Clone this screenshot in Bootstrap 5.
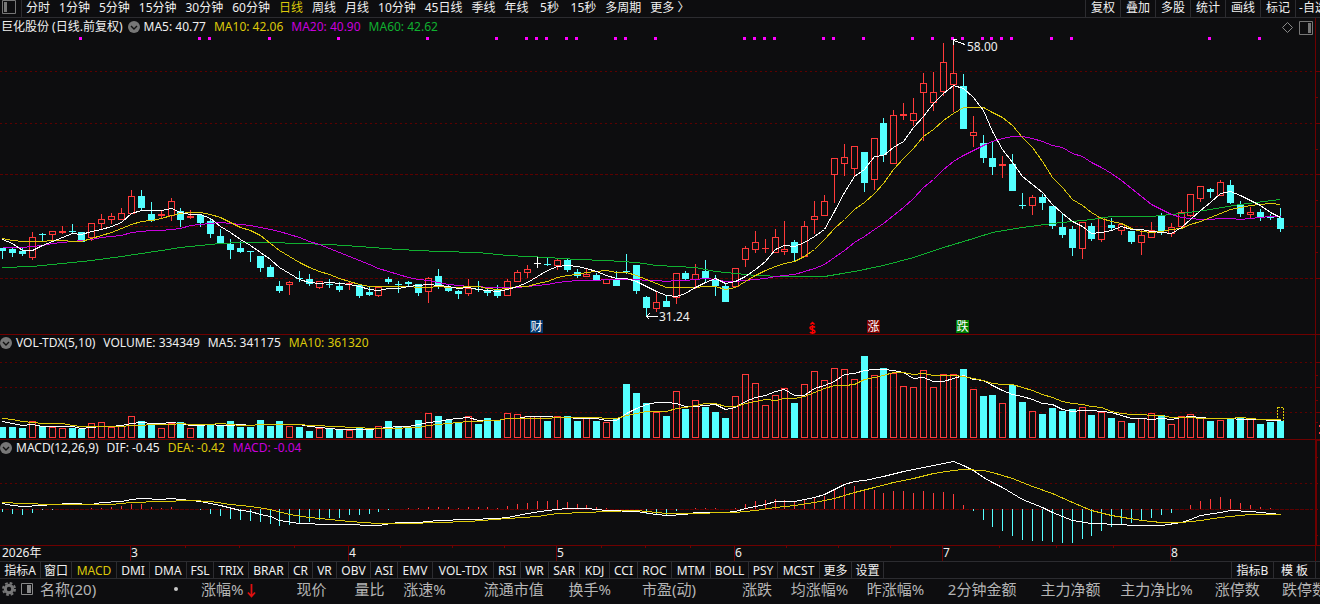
<!DOCTYPE html>
<html lang="zh-CN" data-bs-theme="dark">
<head>
<meta charset="utf-8">
<meta name="viewport" content="width=device-width, initial-scale=1">
<title>巨化股份 日线</title>
<link href="https://cdn.jsdelivr.net/npm/bootstrap@5.3.0/dist/css/bootstrap.min.css" rel="stylesheet">
<style>
:root{--ink:#0d0d0f;--rule:#2c2c30;--up:#ff3a3a;--down:#54ffff;--yel:#dcc80a;--mag:#c800dc;--grn:#10b030;--frame:#6e0000;--dash:#5c0000}
body{background:var(--ink);color:#f0f0f0;font-family:"Noto Sans","Noto Sans CJK SC",sans-serif;font-size:12px;line-height:14px;overflow-x:hidden}
.btn{--bs-btn-padding-x:0;--bs-btn-padding-y:0;--bs-btn-font-size:12px;--bs-btn-line-height:16px;--bs-btn-border-width:0px;--bs-btn-border-radius:0;--bs-btn-color:#f0f0f0;white-space:nowrap}
.btn.current{color:var(--yel)}
.topbar{height:18px;border-bottom:1px solid var(--rule)}
.periods{gap:9px;padding-left:4px;border-left:1px solid var(--rule)}
.periods .btn{min-width:24px}
.tools .btn{width:35px;height:17px;padding-bottom:1px;border-left:1px solid var(--rule);flex:none}
.tools{width:235px}
.panel-head{left:0;top:1px;gap:8px;white-space:nowrap;line-height:14px}
.panel-head svg{display:block}
.stock-head{padding-left:1px;top:2px}
.fold{width:12px;height:12px;flex:none;margin-right:-4px}
.stock-head .fold{margin-left:-3px}
.corner{right:7px;top:2px;gap:5px}
.c-yel{color:var(--yel)}.c-mag{color:var(--mag)}.c-grn{color:var(--grn)}
.plot{display:block;width:100%;shape-rendering:crispEdges}
.plot text{font-size:12px;fill:#f0f0f0;shape-rendering:auto}
.plot .tag{text-anchor:middle;fill:#fff}
.plot .smooth{shape-rendering:auto}
.tabs{height:18px;border-top:1px solid var(--rule);border-bottom:1px solid var(--rule)}
.tabs .btn{--bs-btn-line-height:14px;padding-top:2px;border-right:1px solid var(--rule);flex:none}
.tabs .side{width:42px;border-left:1px solid var(--rule);border-right:0}
.tabs .edge{width:5px;border-left:1px solid var(--rule)}
.quotes{table-layout:fixed;width:1327px;color:#b4b4b4;font-size:15px;line-height:22px;margin-top:-1px}
.quotes th{font-weight:400;text-align:right;padding:0;white-space:nowrap}
.quotes th:first-child{text-align:left;padding-left:2px}
.mark-name{margin-left:7px}
.n0{width:189px}.n1{width:67px}.n2{width:70px}.n3{width:58px}.n4{width:61px}.n5{width:98px}.n6{width:67px}.n7{width:85px}.n8{width:76px}.n9{width:92px}.n10{width:84px}
</style>
</head>
<body>
<header class="topbar d-flex align-items-stretch">
  <button class="btn flex-shrink-0 d-flex" aria-label="侧栏"><svg width="21" height="17"><path d="M2.5.5h13v13h-13z" fill="none" stroke="#777"/><path d="M4 2h3v10H4z" fill="#777"/></svg></button>
  <nav class="periods d-flex flex-grow-1 align-items-start" id="periods"></nav>
  <div class="tools d-flex flex-shrink-0" id="tools"></div>
</header>

<main>
  <section class="position-relative">
    <div class="panel-head stock-head position-absolute d-flex align-items-center">
      <span>巨化股份 (日线.前复权)</span>
      <button class="btn fold" aria-label="折叠"><svg width="12" height="12"><circle cx="6" cy="6" r="6" fill="#777"/><path d="M3 5l3 3 3-3" fill="none" stroke="#111" stroke-width="1.4"/></svg></button>
      <span>MA5: 40.77</span><span class="c-yel">MA10: 42.06</span><span class="c-mag">MA20: 40.90</span><span class="c-grn">MA60: 42.62</span>
    </div>
    <div class="corner position-absolute d-flex">
      <button class="btn d-flex" aria-label="标注"><svg width="13" height="15"><path d="M6.500 2.500l5 5-5 5-5-5z" fill="none" stroke="#888"/></svg></button>
      <button class="btn d-flex" aria-label="右栏"><svg width="14" height="15"><path d="M.5 1.500h13v13H.5z" fill="none" stroke="#777"/><path d="M9 3h3v10H9z" fill="#777"/></svg></button>
    </div>
    <svg class="plot" id="kline"></svg>
  </section>
  <section class="position-relative">
    <div class="panel-head position-absolute d-flex align-items-center">
      <button class="btn fold" aria-label="折叠"><svg width="12" height="12"><circle cx="6" cy="6" r="6" fill="#777"/><path d="M3 5l3 3 3-3" fill="none" stroke="#111" stroke-width="1.4"/></svg></button>
      <span>VOL-TDX(5,10)</span><span>VOLUME: 334349</span><span>MA5: 341175</span><span class="c-yel">MA10: 361320</span>
    </div>
    <svg class="plot" id="volume"></svg>
  </section>
  <section class="position-relative">
    <div class="panel-head position-absolute d-flex align-items-center">
      <button class="btn fold" aria-label="折叠"><svg width="12" height="12"><circle cx="6" cy="6" r="6" fill="#777"/><path d="M3 5l3 3 3-3" fill="none" stroke="#111" stroke-width="1.4"/></svg></button>
      <span>MACD(12,26,9)</span><span>DIF: -0.45</span><span class="c-yel">DEA: -0.42</span><span class="c-mag">MACD: -0.04</span>
    </div>
    <svg class="plot" id="macd"></svg>
  </section>
  <svg class="plot" id="axis"></svg>
</main>

<nav class="tabs d-flex align-items-stretch">
  <div class="d-flex flex-grow-1" id="indicators"></div>
  <button class="btn side">指标B</button><button class="btn side">模 板</button><span class="edge"></span>
</nav>

<footer class="overflow-hidden">
  <table class="quotes mb-0">
    <colgroup><col class="n0"><col class="n1"><col class="n2"><col class="n3"><col class="n4"><col class="n5"><col class="n6"><col class="n7"><col class="n8"><col class="n8"><col class="n8"><col class="n9"><col class="n10"><col class="n9"><col class="n6"><col class="n6"></colgroup>
    <thead><tr>
      <th scope="col"><div class="d-flex align-items-center">
        <svg width="14" height="14" viewBox="0 0 14 14"><circle cx="7" cy="7" r="3.700" fill="none" stroke="#777" stroke-width="3"/><circle cx="7" cy="7" r="6" fill="none" stroke="#777" stroke-width="2" stroke-dasharray="2.700 2.012"/></svg>
        <svg class="ms-1" width="13" height="12"><path d="M1.500.5h11v11h-11z" fill="none" stroke="#888"/><path d="M7 2h4v8H7z" fill="#888"/></svg>
        <span class="mark-name">名称(20)</span><svg class="ms-auto me-2" width="10" height="6"><circle cx="5" cy="3" r="2" fill="#c8c8c8"/></svg>
      </div></th>
      <th scope="col">涨幅%<svg class="ms-1" width="9" height="14"><path d="M4.500 0v12M1 8.500l3.500 4 3.500-4" fill="none" stroke="#e01010" stroke-width="1.800"/></svg></th>
      <th scope="col">现价</th><th scope="col">量比</th><th scope="col">涨速%</th><th scope="col">流通市值</th><th scope="col">换手%</th><th scope="col">市盈(动)</th><th scope="col">涨跌</th><th scope="col">均涨幅%</th><th scope="col">昨涨幅%</th><th scope="col">2分钟金额</th><th scope="col">主力净额</th><th scope="col">主力净比%</th><th scope="col">涨停数</th><th scope="col">跌停数</th>
    </tr></thead>
  </table>
</footer>

<script src="https://cdn.jsdelivr.net/npm/bootstrap@5.3.0/dist/js/bootstrap.bundle.min.js"></script>
<script>
const buttons = (id, items, current) => {
  document.getElementById(id).innerHTML = items.map(item => {
    const [name, width] = [].concat(item);
    return `<button class="btn${name === current ? ' current' : ''}"${width ? ` style="width:${width}px"` : ''}>${name}</button>`;
  }).join('');
};
buttons('periods', ['分时','1分钟','5分钟','15分钟','30分钟','60分钟','日线','周线','月线','10分钟','45日线','季线','年线','5秒','15秒','多周期','更多 〉'], '日线');
buttons('tools', ['复权','叠加','多股','统计','画线','标记','-自选']);
buttons('indicators', [['指标A',41],['窗口',31],['MACD',45],['DMI',33],['DMA',37],['FSL',27],['TRIX',35],['BRAR',40],['CR',24],['VR',24],['OBV',34],['ASI',27],['EMV',35],['VOL-TDX',61],['RSI',27],['WR',28],['SAR',31],['KDJ',30],['CCI',28],['ROC',34],['MTM',39],['BOLL',38],['PSY',29],['MCST',42],['更多',32],['设置',32]], 'MACD');

// one day per entry: kind (r up, c down, w flat), high, body top, body bottom, low
const days = `c 248 248 251 259|c 248 249 253 257|c 248 251 254 256|r 232 237 258 260|c 233 234 235 242|r 231 231 235 240|r 226 231 233 234|c 224 231 232 233|c 232 232 242 242|r 223 223 238 241
r 214 219 224 230|r 213 216 220 224|r 208 213 220 220|r 190 196 214 214|c 190 196 208 210|c 202 214 221 222|r 211 214 216 219|r 198 201 216 221|c 208 211 220 227|r 210 216 218 219
c 215 215 223 227|c 219 221 234 238|c 229 236 243 244|c 239 244 250 259|c 241 248 252 253|c 251 251 252 262|c 256 256 268 272|c 265 267 277 277|c 281 286 291 293|r 281 282 285 295
c 271 278 279 282|c 274 279 284 286|r 281 281 288 289|c 279 284 285 288|c 282 286 290 292|r 282 283 284 290|c 284 285 296 298|c 286 292 295 296|r 287 287 296 297|c 277 279 282 284
c 281 284 285 293|c 281 282 284 286|c 284 284 293 296|r 277 278 292 303|c 269 276 287 289|c 284 288 291 292|c 290 291 294 299|r 279 288 294 296|c 281 289 290 292|c 289 290 293 296
c 285 290 296 298|r 279 281 296 296|r 270 272 282 282|r 265 269 273 278|w 257 263 264 268|c 258 264 265 266|r 258 260 266 270|c 259 260 270 272|c 269 272 276 278|r 269 274 277 277
c 273 275 280 281|r 279 279 284 284|c 271 279 286 286|c 254 271 272 274|c 265 265 291 294|c 296 297 308 317|r 291 302 309 312|c 295 301 307 307|r 273 273 298 304|c 271 273 279 280
r 264 274 280 289|c 260 271 279 282|c 275 279 286 296|c 284 286 302 302|r 268 268 287 287|r 246 248 260 267|r 231 242 250 253|r 239 248 249 253|r 229 237 253 253|r 221 249 252 255
c 240 242 253 261|r 221 226 257 257|r 201 216 220 234|r 195 201 216 216|r 158 158 175 203|r 144 157 164 176|r 146 146 169 177|c 152 152 183 192|r 138 138 180 190|c 118 123 155 162
r 110 115 164 164|r 103 114 116 120|r 98 113 121 126|r 73 83 93 141|r 72 92 103 111|r 43 62 92 96|r 41 73 85 112|c 74 86 129 129|r 116 132 136 147|c 135 143 158 163
c 142 158 167 175|r 156 164 166 178|c 154 164 191 191|c 193 205 206 209|r 195 197 206 215|c 194 197 203 210|c 206 206 226 229|c 213 227 235 238|c 226 229 248 256|r 222 222 249 259
c 223 226 239 241|r 217 217 240 242|c 218 225 228 231|r 223 224 231 235|c 231 231 242 244|r 230 235 243 255|r 222 230 238 238|c 213 216 231 235|r 223 227 234 237|r 210 212 227 228
r 194 194 216 217|r 186 186 199 202|c 188 189 192 198|r 180 182 196 196|c 180 185 203 204|c 201 204 214 217|r 207 212 215 218|c 209 212 218 221|c 214 217 218 220|c 208 218 229 232`
  .split(/[|\n]/).map(s => { const [k, ...v] = s.trim().split(' '); return [k, ...v.map(Number)]; });
const volumes = [11,11,10,17,12,11,10,10,9,15,16,11,12,22,17,15,10,15,16,10,13,14,13,17,11,11,18,12,17,12,11,7,10,9,
9,8,10,9,12,17,12,10,18,25,22,18,16,22,14,20,18,25,24,22,22,17,22,22,17,20,17,16,20,54,45,35,26,
22,47,29,38,31,26,20,42,64,55,33,43,50,35,54,67,58,70,69,59,82,63,70,65,52,51,68,51,64,64,69,49,42,
43,35,53,36,27,24,30,27,29,31,23,26,20,17,15,20,25,23,14,22,24,21,17,18,20,21,20,14,16,17];
const hist = [-3,-5,-6,-4,-1,-1,0,0,0,1,1,2,3,5,5,2,1,2,0,0,-1,-5,-7,-10,-11,-12,-13,-15,-17,-16,-14,-13,-11,-9,
-9,-6,-6,-5,-3,-1,0,1,1,2,2,2,1,2,2,2,1,3,5,6,8,8,9,7,5,4,2,1,0,0,0,-5,-6,
-6,-2,0,1,1,1,0,1,5,8,9,10,9,7,9,11,13,19,22,23,18,19,16,18,18,16,18,16,17,15,4,-2,-11,
-18,-22,-27,-31,-32,-32,-33,-34,-34,-30,-27,-22,-18,-15,-14,-12,-9,-6,-4,0,4,8,10,12,10,6,4,2,1,0];
const ma60 = [[0,267],[3,266],[5,264],[7,262],[9,260],[12,256],[14,253],[16,250],[18,247],[20,245],[22,243],[24,242],[27,242],[30,243],[33,244],[36,246],[40,249],[44,251],[48,252],[51,255],[55,257],[58,259],[61,260],[64,262],[66,265],[68,266],[70,267],[72,271],[74,273],[76,275],[79,276],[83,276],[86,271],[89,265],[92,257],[95,247],[98,238],[100,232],[103,227],[106,223],[110,219],[112,216],[116,216],[119,213],[122,209],[125,204],[129,199]];
const dif = [[0,503],[1,505],[2,506],[4,505],[5,504],[7,503],[9,504],[10,502],[12,501],[13,499],[14,498],[16,499],[17,498],[18,499],[20,501],[22,505],[24,510],[25,511],[26,514],[27,516],[28,520],[30,523],[33,524],[35,524],[37,525],[38,525],[40,522],[42,522],[44,520],[47,519],[50,518],[51,517],[53,513],[55,510],[57,508],[59,508],[61,510],[64,511],[66,514],[67,515],[69,514],[70,512],[73,512],[74,511],[75,508],[77,504],[78,501],[80,501],[82,497],[83,494],[84,489],[85,484],[86,481],[87,480],[89,476],[91,471],[92,469],[94,465],[96,461],[97,465],[98,470],[99,477],[100,482],[101,487],[103,499],[105,507],[106,512],[107,516],[108,520],[110,523],[113,524],[114,525],[117,525],[119,522],[120,519],[121,515],[123,512],[124,510],[126,511],[129,514]];
const dea = [[0,502],[2,503],[5,504],[8,504],[11,504],[13,502],[16,501],[19,500],[21,501],[23,504],[25,506],[27,509],[29,514],[31,517],[33,519],[35,521],[38,523],[41,523],[44,522],[47,521],[51,518],[54,516],[56,513],[59,512],[61,511],[64,510],[66,512],[67,513],[69,513],[74,512],[76,510],[78,507],[80,505],[82,502],[84,498],[86,492],[88,487],[90,482],[92,478],[94,473],[96,470],[97,469],[99,470],[100,472],[102,478],[104,486],[106,493],[108,502],[110,510],[112,515],[115,520],[117,522],[119,522],[121,520],[123,517],[125,515],[126,514],[129,514]];
const alerts = [8,20,21,27,34,43,50,53,54,55,57,58,62,63,66,75,76,77,78,83,84,87,92,94,96,97,99,100,101,102,106,108,122,127];

const average = (series, n, seed) => series.map((_, i) =>
  [i, i < n - 1 ? seed[i] : Math.round(series.slice(i - n + 1, i + 1).reduce((a, b) => a + b) / n)]);
const closes = days.map(d => d[0] === 'c' ? d[3] - 1 : d[2]);

const rect = (x, y, w, h, fill) => `<rect x="${x}" y="${y}" width="${w}" height="${h}" fill="${fill}"/>`;
const box = (x, y, w, h, color, extra = '') => `<rect x="${x + .5}" y="${y + .5}" width="${w - 1}" height="${h - 1}" fill="none" stroke="${color}" ${extra}/>`;
const path = (d, color, extra = '') => `<path d="${d}" fill="none" stroke="${color}" ${extra}/>`;

function draw() {
  const W = document.querySelector('main').clientWidth, edge = W - 5, step = (edge - 38) * 9.902 / 1277;
  const X = i => Math.floor(2.72 + step * i);
  const line = (pts, color) => `<polyline fill="none" stroke="${color}" points="${pts.map(([i, y]) => `${X(i) + .5},${y + .5}`).join(' ')}"/>`;
  const grid = (y, dash, color = 'var(--dash)') => path(`M0 ${y + .5}H${edge - 2}`, color, `stroke-dasharray="${dash}"`);
  const ticks = (ys, w) => ys.map(y => rect(edge, y, w, 1, 'var(--frame)')).join('');
  const put = (id, top, height, body) => {
    const s = document.getElementById(id);
    s.setAttribute('height', height);
    s.setAttribute('viewBox', `0 ${top} ${W} ${height}`);
    s.innerHTML = body + rect(edge, top, 1, height, 'var(--frame)');
  };
  const frame = y => rect(0, y, W, 1, 'var(--frame)');

  // candles with their moving averages
  let k = [71, 123].map(y => grid(y, '2 3')).join('') + [174, 226, 278].map(y => grid(y, '3 2')).join('');
  k += ticks([71, 123, 174, 226, 278], 5) + ticks([97, 149, 200, 252], 3) + frame(334);
  k += alerts.map(i => rect(X(i) - 2, 37, 3, 3, '#f0f')).join('');
  days.forEach(([kind, hi, top, bot, lo], i) => {
    const c = { r: 'var(--up)', c: 'var(--down)', w: '#fff' }[kind], x = X(i);
    if (top > hi) k += rect(x, hi, 1, top - hi, c);
    if (lo > bot) k += rect(x, bot, 1, lo - bot, c);
    k += kind === 'r' && bot - top > 2 ? box(x - 3, top, 7, bot - top, c) : rect(x - 3, top, 7, bot - top, c);
  });
  k += line(ma60, 'var(--grn)');
  k += line(average(closes, 20, [247,247,247,246,245,243,242,241,240,239,237,236,235,232,231,230,230,229,228]), 'var(--mag)');
  k += line(average(closes, 10, [238,240,241,241,241,240,240,241,241]), 'var(--yel)');
  k += line(average(closes, 5, [239,243,250,250]), '#fff');
  const hiX = X(96), loX = X(65);
  k += path(`M${hiX + .5} 40.500L${hiX + 12} 44.500M${hiX + 3.500} 39.500h-3v5`, '#fff') + `<text x="${hiX + 14}" y="51">58.00</text>`;
  k += path(`M${loX + .5} 316.500H${loX + 12}M${loX + 3.500} 313.500l-3 3 3 3`, '#fff') + `<text x="${loX + 13}" y="321">31.24</text>`;
  [[X(54) - 7, '财', '#003870'], [X(88) - 7, '涨', '#800000'], [X(97) - 7, '跌', '#008000']].forEach(([x, t, c]) => {
    k += rect(x, 320, 13, 13, c) + `<text class="tag" x="${x + 6.500}" y="331">${t}</text>`;
  });
  const s = X(82) - 1.5;
  k += path(`M${s - 2} 324.500l2-2 2 2M${s + 2.500} 327.500c-1-1.500-5-1.500-5 .5s5 1.500 5 3.500-4 2-5 .5M${s} 325v9`, '#f00', 'class="smooth" stroke-width="1.500"');
  put('kline', 18, 317, k);

  // volume
  let v = grid(362, '2 3') + grid(387, '2 3') + grid(412, '2 3') + ticks([362, 387, 412], 5) + ticks([375, 400, 422], 3) + frame(439);
  volumes.forEach((h, i) => {
    v += days[i][0] === 'c' ? rect(X(i) - 3, 438 - h, 7, h, 'var(--down)') : box(X(i) - 3, 438 - h, 7, h, 'var(--up)');
  });
  v += box(X(129) - 3, 407, 7, 15, 'var(--yel)', 'stroke-dasharray="2 1"');
  v += rect(X(129) - 3, 421, 7, 17, 'var(--down)');
  const up = pts => pts.map(([i, h]) => [i, 438 - h]);
  v += line(up(average(volumes, 5, [17,15,13,14])), '#fff') + line(up(average(volumes, 10, [20,19,17,16,15,15,15,13,12])), 'var(--yel)');
  v += rect(W - 1, 425, 1, 2, 'var(--up)') + rect(W - 1, 432, 1, 2, 'var(--up)');
  put('volume', 335, 105, v);

  // MACD
  let m = grid(483, '2 3') + grid(509, '4 1') + ticks([457, 483, 509, 535], 3) + frame(545) + rect(edge, 441, 2, 104, 'var(--frame)') + rect(edge, 440, 5, 1, 'var(--frame)');
  hist.forEach((h, i) => { m += h > 0 ? rect(X(i), 509 - h, 1, h, 'var(--up)') : rect(X(i), 509, 1, -h, 'var(--down)'); });
  m += line(dif, '#fff') + line(dea, 'var(--yel)');
  put('macd', 440, 106, m);

  // dates
  let a = '<text x="2" y="557">2026年</text>';
  [[13, 3], [35, 4], [56, 5], [74, 6], [95, 7], [118, 8]].forEach(([i, t]) => {
    const x = X(i) - 1;
    a += rect(x, 546, 1, 15, 'var(--frame)') + `<text x="${x + 1}" y="557">${t}</text>`;
  });
  [185,239,294,400,452,504,601,645,690,786,838,890,999,1056,1113].forEach(x => { a += rect(Math.round(x * W / 1320), 546, 1, 2, 'var(--frame)'); });
  put('axis', 546, 15, a);
}
draw();
addEventListener('resize', draw);
</script>
</body>
</html>
